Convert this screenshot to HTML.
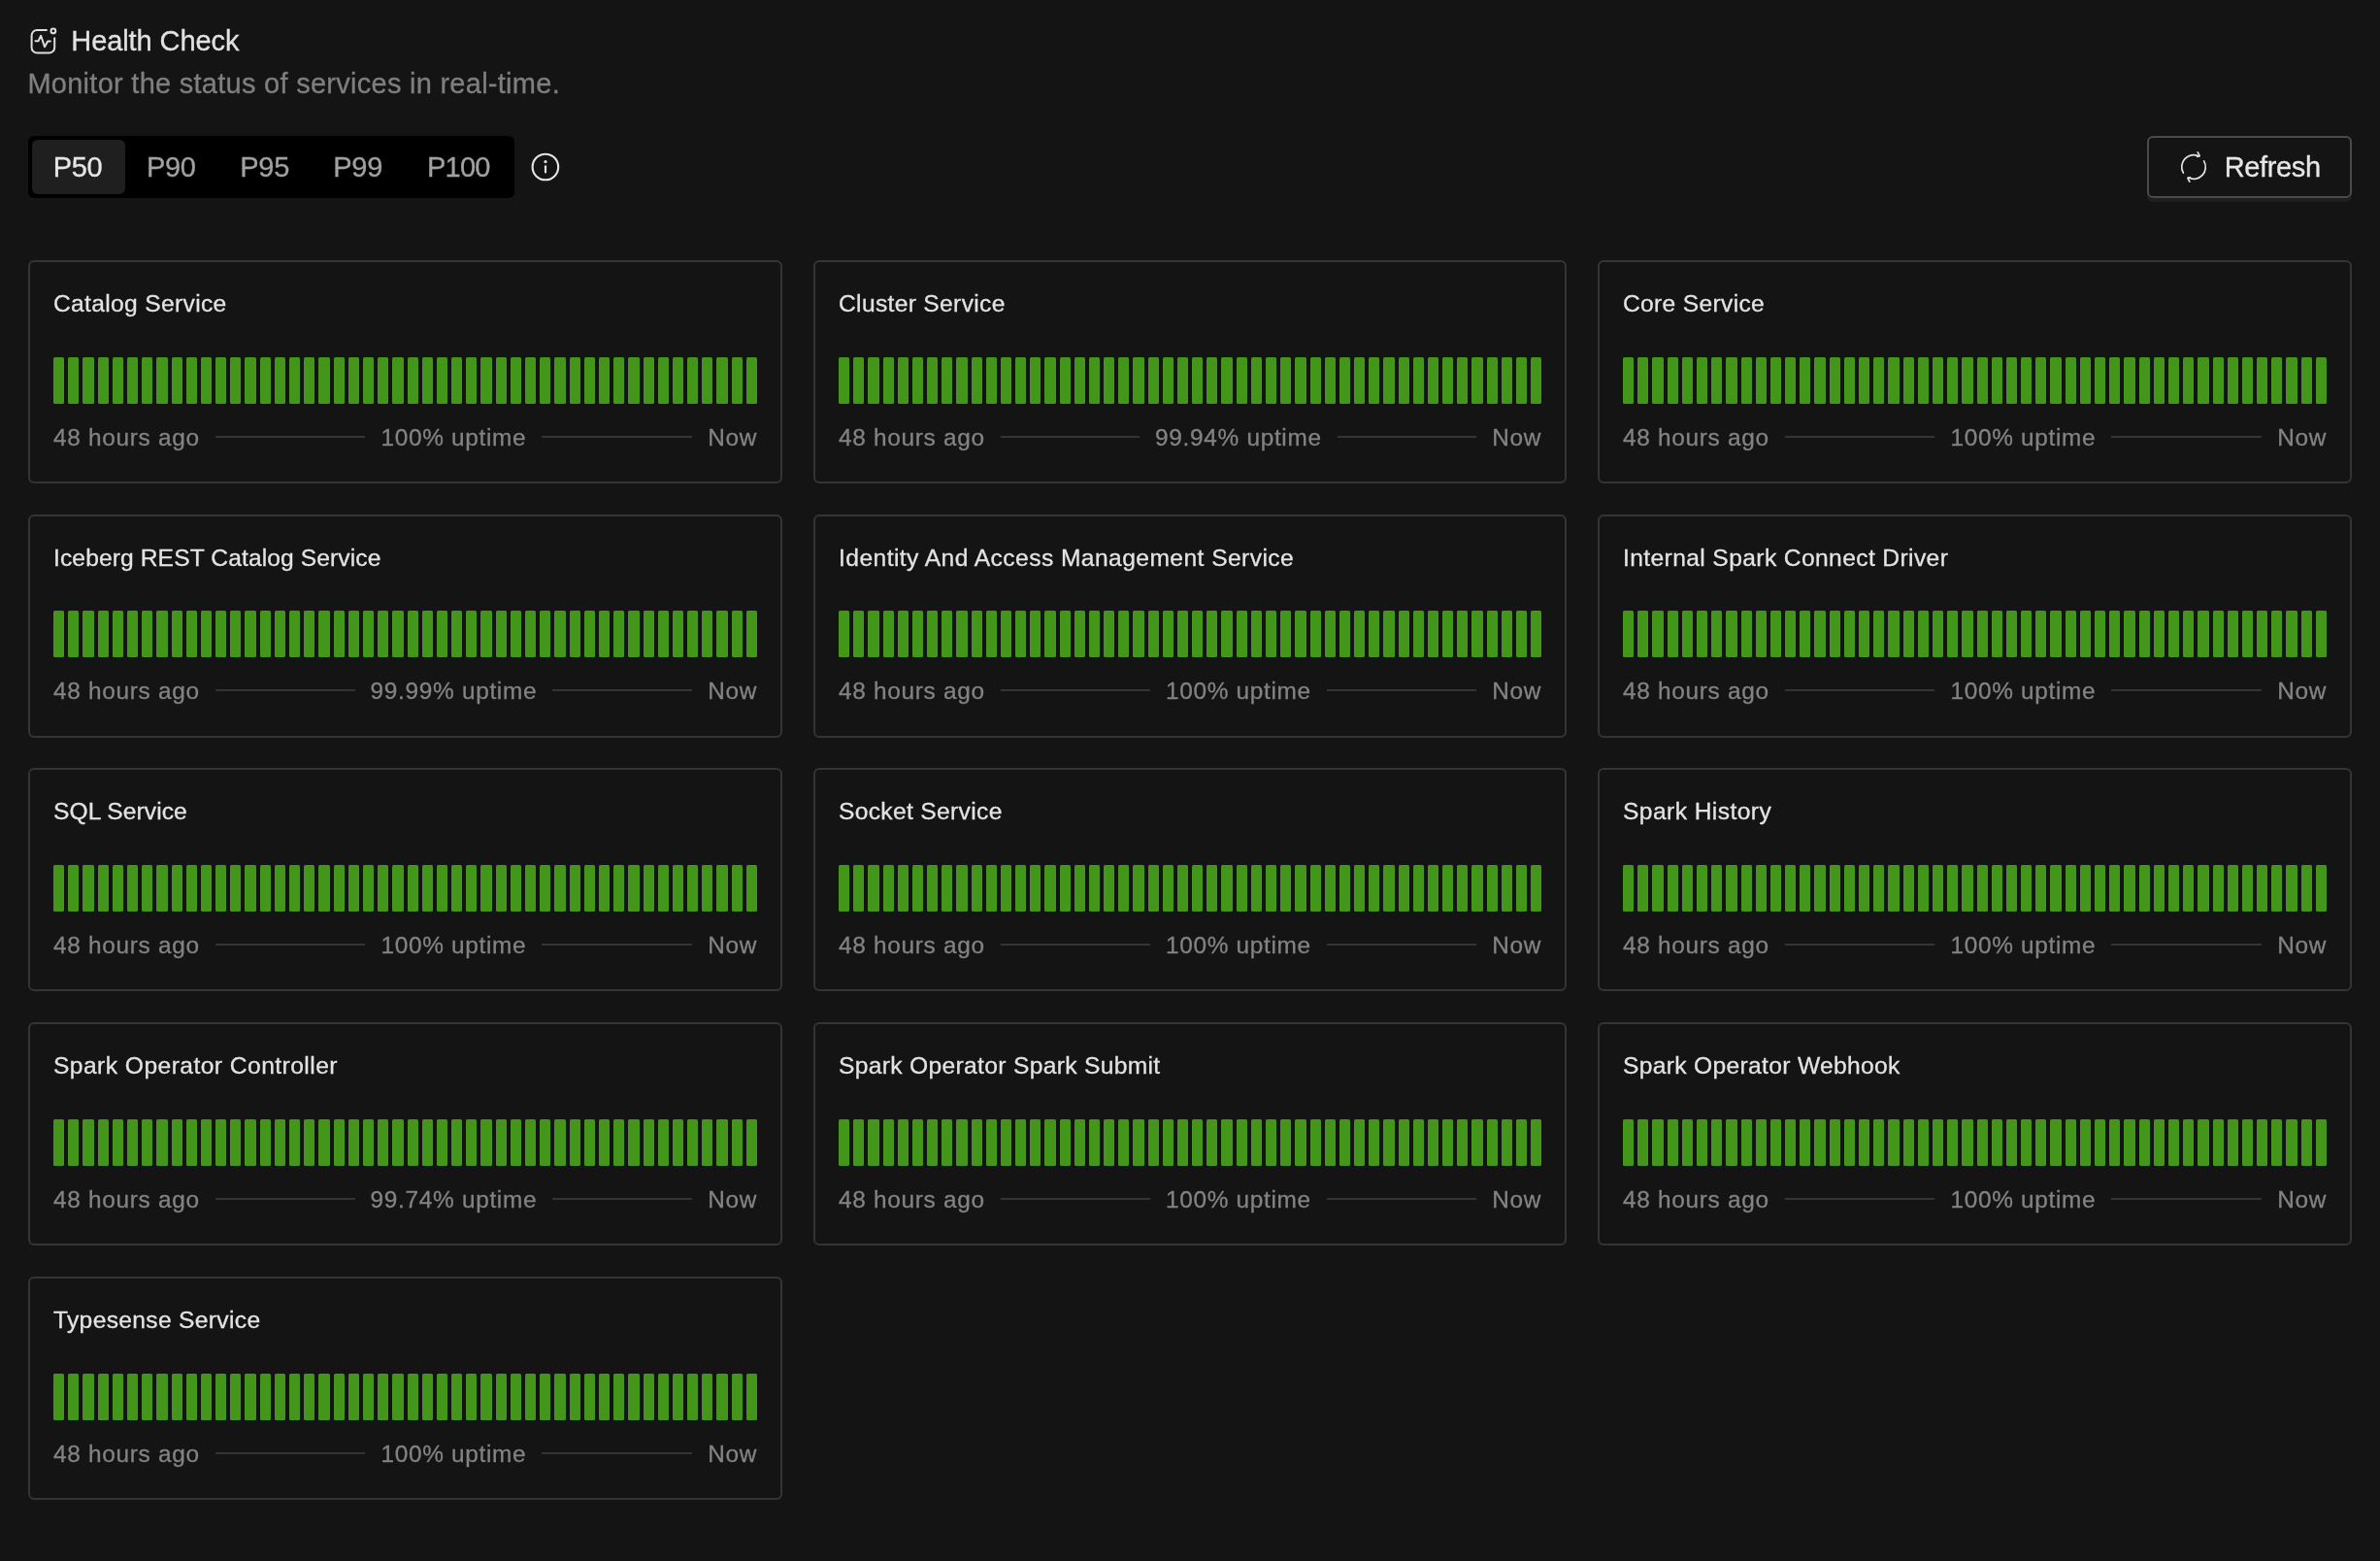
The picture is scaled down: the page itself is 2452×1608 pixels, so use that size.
<!DOCTYPE html>
<html><head><meta charset="utf-8"><title>Health Check</title>
<style>
html,body{margin:0;padding:0;}
body{-webkit-font-smoothing:antialiased;width:2452px;height:1608px;background:#141414;position:relative;overflow:hidden;font-family:"Liberation Sans",sans-serif;}
.abs{position:absolute;}
#root{position:absolute;left:0;top:0;width:2452px;height:1608px;will-change:transform;-webkit-text-stroke:0.3px currentColor;}
#hicon{position:absolute;left:0;top:0;}
#title{position:absolute;left:73.3px;top:26.3px;font-size:29px;line-height:32px;color:#e2e2e2;letter-spacing:-0.09px;white-space:nowrap;}
#sub{position:absolute;left:28.4px;top:69.8px;font-size:29px;line-height:32px;color:#7f7f7f;letter-spacing:0.27px;white-space:nowrap;}
#seg{position:absolute;left:29px;top:140px;width:501px;height:64px;background:#000;border-radius:6px;}
#pill{position:absolute;left:4px;top:4px;width:96px;height:56px;background:#1f1f1f;border-radius:6px;}
.sg{position:absolute;top:0px;height:64px;line-height:64px;font-size:29px;color:#a1a1a1;white-space:nowrap;letter-spacing:-0.3px;}
.sg.on{color:#e6e6e6;}
#btn{position:absolute;left:2212px;top:140px;width:211px;height:64px;box-sizing:border-box;border:2px solid #4a4a4a;border-radius:6px;box-shadow:0 4px 0 #1f1f1f;}
#btxt{position:absolute;left:2291.8px;top:156.3px;font-size:29px;line-height:32px;color:#e6e6e6;white-space:nowrap;letter-spacing:-0.38px;}
.card{position:absolute;width:777px;height:230px;box-sizing:border-box;border:2px solid #333533;border-radius:6px;}
.ct{position:absolute;left:24px;top:27px;font-size:24.6px;line-height:32px;color:#e3e3e3;letter-spacing:0.33px;white-space:nowrap;}
.bars{position:absolute;left:24px;top:98px;width:725px;height:48px;display:flex;gap:4px;}
.bars i{flex:1 1 0;background:#44961b;border-radius:1.5px;}
.ft{position:absolute;left:24px;top:165px;width:725px;height:32px;display:flex;align-items:center;font-size:24.4px;line-height:32px;color:#838383;white-space:nowrap;}
.ft span{letter-spacing:0.69px;}
.ft b{flex:1 1 0;height:2px;background:#333533;margin:0 16px;position:relative;top:-1px;}
</style></head><body><div id="root">
<svg id="hicon" width="80" height="70" viewBox="0 0 80 70" fill="none" stroke="#dedede" stroke-width="2" stroke-linecap="round" stroke-linejoin="round">
<path d="M47.9 31 H38.2 A5.6 5.6 0 0 0 32.6 36.6 V48.9 A5.6 5.6 0 0 0 38.2 54.5 H50.6 A5.6 5.6 0 0 0 56.2 48.9 V39.3"/>
<circle cx="54.9" cy="31.9" r="2.4"/>
<path d="M36.5 42.35 H39.45 L42.14 36.8 L46 48.2 L49.2 42.4 H51.9"/>
</svg>
<div id="title">Health Check</div>
<div id="sub">Monitor the status of services in real-time.</div>
<div id="seg"><div id="pill"></div>
<div class="sg on" style="left:25.7px">P50</div>
<div class="sg" style="left:122px">P90</div>
<div class="sg" style="left:218.3px">P95</div>
<div class="sg" style="left:314.3px">P99</div>
<div class="sg" style="left:411px;letter-spacing:-0.77px">P100</div>
</div>
<svg class="abs" style="left:540px;top:150px" width="44" height="44" viewBox="540 150 44 44" fill="none" stroke="#e4e4e4" stroke-width="2.1" stroke-linecap="round">
<circle cx="561.9" cy="172" r="13.3"/>
<line x1="562" y1="171.2" x2="562" y2="177.4"/>
<circle cx="562" cy="166.6" r="1.6" fill="#e4e4e4" stroke="none"/>
</svg>
<div id="btn"></div>
<svg class="abs" style="left:2240px;top:150px" width="44" height="44" viewBox="2240 150 44 44" fill="none" stroke="#e2e2e2" stroke-width="1.7" stroke-linecap="round" stroke-linejoin="round">
<path d="M2249.4 178.1 A12.2 12.2 0 0 1 2265.2 160.9"/>
<path d="M2264.2 156.8 L2266.2 160.6 L2263.6 161.3"/>
<path d="M2270.6 165.9 A12.2 12.2 0 0 1 2254.8 183.1"/>
<path d="M2255.8 187.2 L2253.8 183.4 L2256.4 182.7"/>
</svg>
<div id="btxt">Refresh</div>
<div class="card" style="left:29px;top:268px"><div class="ct">Catalog Service</div><div class="bars"><i></i><i></i><i></i><i></i><i></i><i></i><i></i><i></i><i></i><i></i><i></i><i></i><i></i><i></i><i></i><i></i><i></i><i></i><i></i><i></i><i></i><i></i><i></i><i></i><i></i><i></i><i></i><i></i><i></i><i></i><i></i><i></i><i></i><i></i><i></i><i></i><i></i><i></i><i></i><i></i><i></i><i></i><i></i><i></i><i></i><i></i><i></i><i></i></div><div class="ft"><span>48 hours ago</span><b></b><span>100% uptime</span><b></b><span>Now</span></div></div><div class="card" style="left:838px;top:268px;width:776px"><div class="ct">Cluster Service</div><div class="bars" style="width:724px"><i></i><i></i><i></i><i></i><i></i><i></i><i></i><i></i><i></i><i></i><i></i><i></i><i></i><i></i><i></i><i></i><i></i><i></i><i></i><i></i><i></i><i></i><i></i><i></i><i></i><i></i><i></i><i></i><i></i><i></i><i></i><i></i><i></i><i></i><i></i><i></i><i></i><i></i><i></i><i></i><i></i><i></i><i></i><i></i><i></i><i></i><i></i><i></i></div><div class="ft" style="width:724px"><span>48 hours ago</span><b></b><span>99.94% uptime</span><b></b><span>Now</span></div></div><div class="card" style="left:1646px;top:268px"><div class="ct">Core Service</div><div class="bars"><i></i><i></i><i></i><i></i><i></i><i></i><i></i><i></i><i></i><i></i><i></i><i></i><i></i><i></i><i></i><i></i><i></i><i></i><i></i><i></i><i></i><i></i><i></i><i></i><i></i><i></i><i></i><i></i><i></i><i></i><i></i><i></i><i></i><i></i><i></i><i></i><i></i><i></i><i></i><i></i><i></i><i></i><i></i><i></i><i></i><i></i><i></i><i></i></div><div class="ft"><span>48 hours ago</span><b></b><span>100% uptime</span><b></b><span>Now</span></div></div><div class="card" style="left:29px;top:530px"><div class="ct" style="letter-spacing:0.11px">Iceberg REST Catalog Service</div><div class="bars" style=";top:97px"><i></i><i></i><i></i><i></i><i></i><i></i><i></i><i></i><i></i><i></i><i></i><i></i><i></i><i></i><i></i><i></i><i></i><i></i><i></i><i></i><i></i><i></i><i></i><i></i><i></i><i></i><i></i><i></i><i></i><i></i><i></i><i></i><i></i><i></i><i></i><i></i><i></i><i></i><i></i><i></i><i></i><i></i><i></i><i></i><i></i><i></i><i></i><i></i></div><div class="ft" style=";top:164px"><span>48 hours ago</span><b></b><span>99.99% uptime</span><b></b><span>Now</span></div></div><div class="card" style="left:838px;top:530px;width:776px"><div class="ct" style="letter-spacing:0.44px">Identity And Access Management Service</div><div class="bars" style="width:724px;top:97px"><i></i><i></i><i></i><i></i><i></i><i></i><i></i><i></i><i></i><i></i><i></i><i></i><i></i><i></i><i></i><i></i><i></i><i></i><i></i><i></i><i></i><i></i><i></i><i></i><i></i><i></i><i></i><i></i><i></i><i></i><i></i><i></i><i></i><i></i><i></i><i></i><i></i><i></i><i></i><i></i><i></i><i></i><i></i><i></i><i></i><i></i><i></i><i></i></div><div class="ft" style="width:724px;top:164px"><span>48 hours ago</span><b></b><span>100% uptime</span><b></b><span>Now</span></div></div><div class="card" style="left:1646px;top:530px"><div class="ct" style="letter-spacing:0.39px">Internal Spark Connect Driver</div><div class="bars" style=";top:97px"><i></i><i></i><i></i><i></i><i></i><i></i><i></i><i></i><i></i><i></i><i></i><i></i><i></i><i></i><i></i><i></i><i></i><i></i><i></i><i></i><i></i><i></i><i></i><i></i><i></i><i></i><i></i><i></i><i></i><i></i><i></i><i></i><i></i><i></i><i></i><i></i><i></i><i></i><i></i><i></i><i></i><i></i><i></i><i></i><i></i><i></i><i></i><i></i></div><div class="ft" style=";top:164px"><span>48 hours ago</span><b></b><span>100% uptime</span><b></b><span>Now</span></div></div><div class="card" style="left:29px;top:791px"><div class="ct" style="letter-spacing:0.06px">SQL Service</div><div class="bars"><i></i><i></i><i></i><i></i><i></i><i></i><i></i><i></i><i></i><i></i><i></i><i></i><i></i><i></i><i></i><i></i><i></i><i></i><i></i><i></i><i></i><i></i><i></i><i></i><i></i><i></i><i></i><i></i><i></i><i></i><i></i><i></i><i></i><i></i><i></i><i></i><i></i><i></i><i></i><i></i><i></i><i></i><i></i><i></i><i></i><i></i><i></i><i></i></div><div class="ft"><span>48 hours ago</span><b></b><span>100% uptime</span><b></b><span>Now</span></div></div><div class="card" style="left:838px;top:791px;width:776px"><div class="ct">Socket Service</div><div class="bars" style="width:724px"><i></i><i></i><i></i><i></i><i></i><i></i><i></i><i></i><i></i><i></i><i></i><i></i><i></i><i></i><i></i><i></i><i></i><i></i><i></i><i></i><i></i><i></i><i></i><i></i><i></i><i></i><i></i><i></i><i></i><i></i><i></i><i></i><i></i><i></i><i></i><i></i><i></i><i></i><i></i><i></i><i></i><i></i><i></i><i></i><i></i><i></i><i></i><i></i></div><div class="ft" style="width:724px"><span>48 hours ago</span><b></b><span>100% uptime</span><b></b><span>Now</span></div></div><div class="card" style="left:1646px;top:791px"><div class="ct" style="letter-spacing:0.43px">Spark History</div><div class="bars"><i></i><i></i><i></i><i></i><i></i><i></i><i></i><i></i><i></i><i></i><i></i><i></i><i></i><i></i><i></i><i></i><i></i><i></i><i></i><i></i><i></i><i></i><i></i><i></i><i></i><i></i><i></i><i></i><i></i><i></i><i></i><i></i><i></i><i></i><i></i><i></i><i></i><i></i><i></i><i></i><i></i><i></i><i></i><i></i><i></i><i></i><i></i><i></i></div><div class="ft"><span>48 hours ago</span><b></b><span>100% uptime</span><b></b><span>Now</span></div></div><div class="card" style="left:29px;top:1053px"><div class="ct" style="letter-spacing:0.455px">Spark Operator Controller</div><div class="bars"><i></i><i></i><i></i><i></i><i></i><i></i><i></i><i></i><i></i><i></i><i></i><i></i><i></i><i></i><i></i><i></i><i></i><i></i><i></i><i></i><i></i><i></i><i></i><i></i><i></i><i></i><i></i><i></i><i></i><i></i><i></i><i></i><i></i><i></i><i></i><i></i><i></i><i></i><i></i><i></i><i></i><i></i><i></i><i></i><i></i><i></i><i></i><i></i></div><div class="ft"><span>48 hours ago</span><b></b><span>99.74% uptime</span><b></b><span>Now</span></div></div><div class="card" style="left:838px;top:1053px;width:776px"><div class="ct">Spark Operator Spark Submit</div><div class="bars" style="width:724px"><i></i><i></i><i></i><i></i><i></i><i></i><i></i><i></i><i></i><i></i><i></i><i></i><i></i><i></i><i></i><i></i><i></i><i></i><i></i><i></i><i></i><i></i><i></i><i></i><i></i><i></i><i></i><i></i><i></i><i></i><i></i><i></i><i></i><i></i><i></i><i></i><i></i><i></i><i></i><i></i><i></i><i></i><i></i><i></i><i></i><i></i><i></i><i></i></div><div class="ft" style="width:724px"><span>48 hours ago</span><b></b><span>100% uptime</span><b></b><span>Now</span></div></div><div class="card" style="left:1646px;top:1053px"><div class="ct">Spark Operator Webhook</div><div class="bars"><i></i><i></i><i></i><i></i><i></i><i></i><i></i><i></i><i></i><i></i><i></i><i></i><i></i><i></i><i></i><i></i><i></i><i></i><i></i><i></i><i></i><i></i><i></i><i></i><i></i><i></i><i></i><i></i><i></i><i></i><i></i><i></i><i></i><i></i><i></i><i></i><i></i><i></i><i></i><i></i><i></i><i></i><i></i><i></i><i></i><i></i><i></i><i></i></div><div class="ft"><span>48 hours ago</span><b></b><span>100% uptime</span><b></b><span>Now</span></div></div><div class="card" style="left:29px;top:1315px"><div class="ct">Typesense Service</div><div class="bars"><i></i><i></i><i></i><i></i><i></i><i></i><i></i><i></i><i></i><i></i><i></i><i></i><i></i><i></i><i></i><i></i><i></i><i></i><i></i><i></i><i></i><i></i><i></i><i></i><i></i><i></i><i></i><i></i><i></i><i></i><i></i><i></i><i></i><i></i><i></i><i></i><i></i><i></i><i></i><i></i><i></i><i></i><i></i><i></i><i></i><i></i><i></i><i></i></div><div class="ft"><span>48 hours ago</span><b></b><span>100% uptime</span><b></b><span>Now</span></div></div>
</div></body></html>
